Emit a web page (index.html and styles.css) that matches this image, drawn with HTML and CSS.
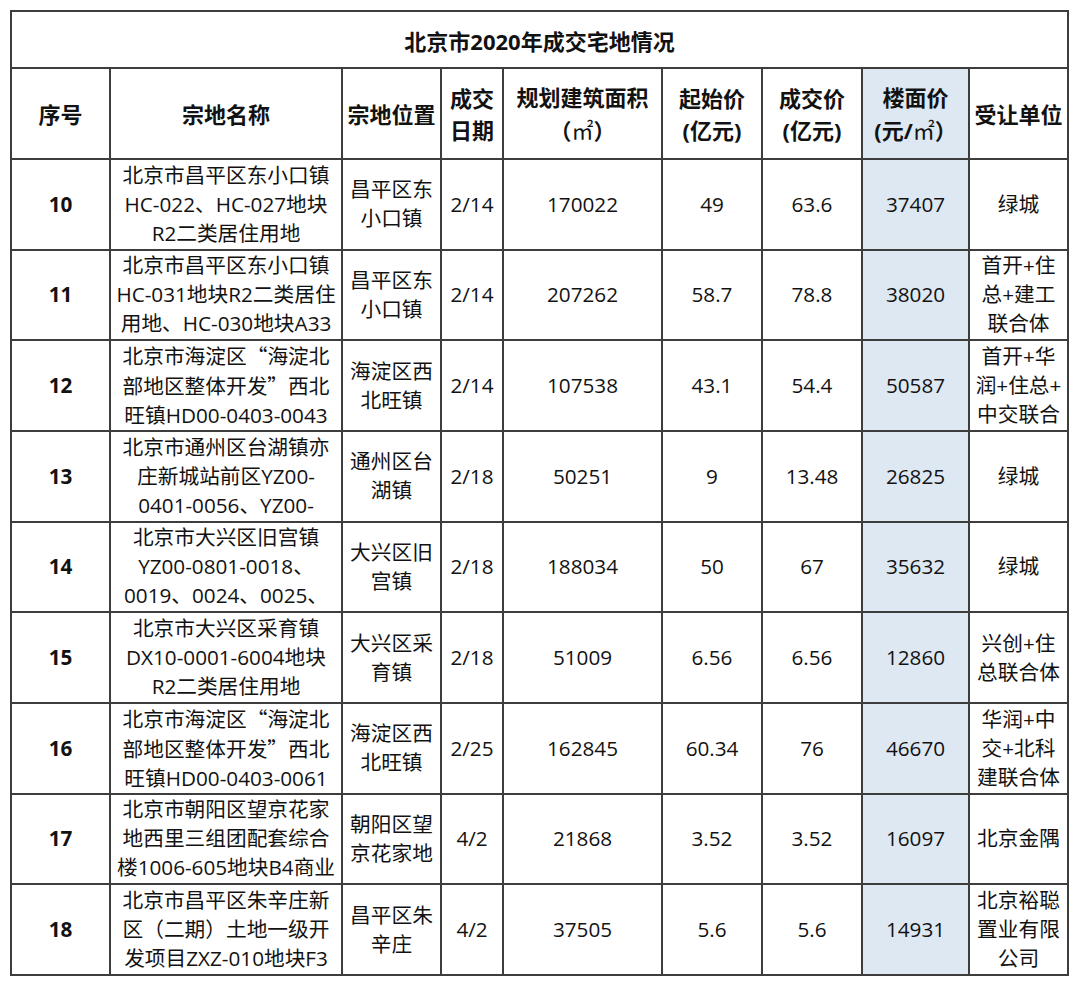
FILE: index.html
```html
<!DOCTYPE html>
<html lang="zh-CN">
<head>
<meta charset="utf-8">
<title>北京市2020年成交宅地情况</title>
<link rel="stylesheet" href="styles.css">
</head>
<body>
<div class="sheet">
  <div class="cell title"><p>北京市2020年成交宅地情况</p></div>

  <div class="cell head"><p>序号</p></div>
  <div class="cell head"><p>宗地名称</p></div>
  <div class="cell head"><p>宗地位置</p></div>
  <div class="cell head"><p>成交<br>日期</p></div>
  <div class="cell head"><p>规划建筑面积<br><span class="cjk">（<span class="unit">㎡</span>）</span></p></div>
  <div class="cell head"><p>起始价<br>(亿元)</p></div>
  <div class="cell head"><p>成交价<br>(亿元)</p></div>
  <div class="cell head blue"><p>楼面价<br>(元/<span class="unit">㎡</span><span class="cjk">）</span></p></div>
  <div class="cell head"><p>受让单位</p></div>

  <div class="cell idx"><p>10</p></div>
  <div class="cell"><p>北京市昌平区东小口镇<br>HC-022、HC-027地块<br>R2二类居住用地</p></div>
  <div class="cell"><p>昌平区东<br>小口镇</p></div>
  <div class="cell"><p>2/14</p></div>
  <div class="cell"><p>170022</p></div>
  <div class="cell"><p>49</p></div>
  <div class="cell"><p>63.6</p></div>
  <div class="cell blue"><p>37407</p></div>
  <div class="cell"><p>绿城</p></div>

  <div class="cell idx"><p>11</p></div>
  <div class="cell"><p>北京市昌平区东小口镇<br>HC-031地块R2二类居住<br>用地、HC-030地块A33</p></div>
  <div class="cell"><p>昌平区东<br>小口镇</p></div>
  <div class="cell"><p>2/14</p></div>
  <div class="cell"><p>207262</p></div>
  <div class="cell"><p>58.7</p></div>
  <div class="cell"><p>78.8</p></div>
  <div class="cell blue"><p>38020</p></div>
  <div class="cell"><p>首开+住<br>总+建工<br>联合体</p></div>

  <div class="cell idx"><p>12</p></div>
  <div class="cell"><p>北京市海淀区<span class="cjk">“</span>海淀北<br>部地区整体开发<span class="cjk">”</span>西北<br>旺镇HD00-0403-0043</p></div>
  <div class="cell"><p>海淀区西<br>北旺镇</p></div>
  <div class="cell"><p>2/14</p></div>
  <div class="cell"><p>107538</p></div>
  <div class="cell"><p>43.1</p></div>
  <div class="cell"><p>54.4</p></div>
  <div class="cell blue"><p>50587</p></div>
  <div class="cell"><p>首开+华<br>润+住总+<br>中交联合</p></div>

  <div class="cell idx"><p>13</p></div>
  <div class="cell"><p>北京市通州区台湖镇亦<br>庄新城站前区YZ00-<br>0401-0056、YZ00-</p></div>
  <div class="cell"><p>通州区台<br>湖镇</p></div>
  <div class="cell"><p>2/18</p></div>
  <div class="cell"><p>50251</p></div>
  <div class="cell"><p>9</p></div>
  <div class="cell"><p>13.48</p></div>
  <div class="cell blue"><p>26825</p></div>
  <div class="cell"><p>绿城</p></div>

  <div class="cell idx"><p>14</p></div>
  <div class="cell"><p>北京市大兴区旧宫镇<br>YZ00-0801-0018、<br>0019、0024、0025、</p></div>
  <div class="cell"><p>大兴区旧<br>宫镇</p></div>
  <div class="cell"><p>2/18</p></div>
  <div class="cell"><p>188034</p></div>
  <div class="cell"><p>50</p></div>
  <div class="cell"><p>67</p></div>
  <div class="cell blue"><p>35632</p></div>
  <div class="cell"><p>绿城</p></div>

  <div class="cell idx"><p>15</p></div>
  <div class="cell"><p>北京市大兴区采育镇<br>DX10-0001-6004地块<br>R2二类居住用地</p></div>
  <div class="cell"><p>大兴区采<br>育镇</p></div>
  <div class="cell"><p>2/18</p></div>
  <div class="cell"><p>51009</p></div>
  <div class="cell"><p>6.56</p></div>
  <div class="cell"><p>6.56</p></div>
  <div class="cell blue"><p>12860</p></div>
  <div class="cell"><p>兴创+住<br>总联合体</p></div>

  <div class="cell idx"><p>16</p></div>
  <div class="cell"><p>北京市海淀区<span class="cjk">“</span>海淀北<br>部地区整体开发<span class="cjk">”</span>西北<br>旺镇HD00-0403-0061</p></div>
  <div class="cell"><p>海淀区西<br>北旺镇</p></div>
  <div class="cell"><p>2/25</p></div>
  <div class="cell"><p>162845</p></div>
  <div class="cell"><p>60.34</p></div>
  <div class="cell"><p>76</p></div>
  <div class="cell blue"><p>46670</p></div>
  <div class="cell"><p>华润+中<br>交+北科<br>建联合体</p></div>

  <div class="cell idx"><p>17</p></div>
  <div class="cell"><p>北京市朝阳区望京花家<br>地西里三组团配套综合<br>楼1006-605地块B4商业</p></div>
  <div class="cell"><p>朝阳区望<br>京花家地</p></div>
  <div class="cell"><p>4/2</p></div>
  <div class="cell"><p>21868</p></div>
  <div class="cell"><p>3.52</p></div>
  <div class="cell"><p>3.52</p></div>
  <div class="cell blue"><p>16097</p></div>
  <div class="cell"><p>北京金隅</p></div>

  <div class="cell idx"><p>18</p></div>
  <div class="cell"><p>北京市昌平区朱辛庄新<br>区（二期）土地一级开<br>发项目ZXZ-010地块F3</p></div>
  <div class="cell"><p>昌平区朱<br>辛庄</p></div>
  <div class="cell"><p>4/2</p></div>
  <div class="cell"><p>37505</p></div>
  <div class="cell"><p>5.6</p></div>
  <div class="cell"><p>5.6</p></div>
  <div class="cell blue"><p>14931</p></div>
  <div class="cell"><p>北京裕聪<br>置业有限<br>公司</p></div>
</div>
</body>
</html>
```

FILE: styles.css
```css
html, body {
  margin: 0;
  background: #ffffff;
}

body {
  padding: 10px;
  font-family: "Open Sans", "Noto Sans CJK SC", sans-serif;
  color: #121212;
}

.sheet {
  display: grid;
  width: fit-content;
  grid-template-columns: 97px 230px 97px 60px 157px 98px 98px 105px 97px;
  grid-template-rows: 55px 89px repeat(9, 88.67px);
  gap: 2px;
  padding: 2px;
  background: #3d3d3d;
}

.cell {
  background: #ffffff;
  display: flex;
  align-items: center;
  justify-content: center;
  text-align: center;
  font-size: 20.7px;
  line-height: 29px;
  overflow: hidden;
  white-space: nowrap;
}

.cell p {
  margin: 0;
}

.title {
  grid-column: 1 / -1;
  font-weight: 700;
  font-size: 22px;
  padding-top: 4px;
}

.head {
  font-weight: 700;
  font-size: 22px;
  line-height: 32px;
}

.idx {
  font-weight: 700;
}

.blue {
  background: #dde8f3;
}

.cjk {
  font-family: "Noto Sans CJK SC", sans-serif;
}

.unit {
  font-family: "Noto Sans CJK SC", sans-serif;
  font-weight: 400;
}
```
